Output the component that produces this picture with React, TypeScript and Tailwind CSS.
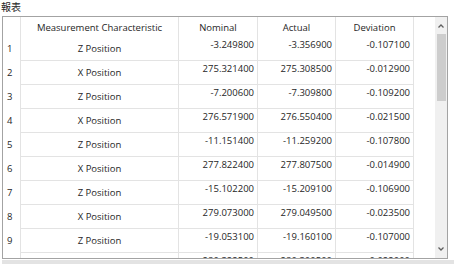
const rows = [
  ['1', 'Z Position', '-3.249800', '-3.356900', '-0.107100'],
  ['2', 'X Position', '275.321400', '275.308500', '-0.012900'],
  ['3', 'Z Position', '-7.200600', '-7.309800', '-0.109200'],
  ['4', 'X Position', '276.571900', '276.550400', '-0.021500'],
  ['5', 'Z Position', '-11.151400', '-11.259200', '-0.107800'],
  ['6', 'X Position', '277.822400', '277.807500', '-0.014900'],
  ['7', 'Z Position', '-15.102200', '-15.209100', '-0.106900'],
  ['8', 'X Position', '279.073000', '279.049500', '-0.023500'],
  ['9', 'Z Position', '-19.053100', '-19.160100', '-0.107000'],
  ['10', 'X Position', '280.322500', '280.300500', '-0.022000'],
];

export default function App() {
  return (
    <div className="w-[454px] h-[264px] bg-white flex flex-col overflow-hidden text-[#262626] font-['Open_Sans','Noto_Sans_CJK_TC',sans-serif] text-[9.5px]">
      {/* タイトル */}
      <div className="h-[16px] pl-[1px] pt-[1px] text-[10px] leading-[12px] font-['Noto_Sans_CJK_TC',sans-serif]">
        報表
      </div>

      {/* テーブル */}
      <div className="ml-[2px] w-[446px] h-[243px] border border-[#a3a3a3] flex">
        <div className="flex-1 overflow-hidden">
          {/* ヘッダー */}
          <div className="flex h-[20px]">
            <div className="w-[18px] border-r border-[#e3e3e3]" />
            <div className="w-[158px] border-r border-[#e3e3e3] text-center pt-[5px] leading-[12px]">
              Measurement Characteristic
            </div>
            <div className="w-[79px] border-r border-[#e3e3e3] text-center pt-[5px] leading-[12px]">
              Nominal
            </div>
            <div className="w-[78px] border-r border-[#e3e3e3] text-center pt-[5px] leading-[12px]">
              Actual
            </div>
            <div className="w-[78px] border-r border-[#e3e3e3] text-center pt-[5px] leading-[12px]">
              Deviation
            </div>
          </div>

          {rows.map((r) => (
            <div key={r[0]} className="flex h-[24px]">
              <div className="w-[18px] border-r border-[#e3e3e3] pl-[4px] flex items-center leading-[12px]">
                {r[0]}
              </div>
              <div className="w-[158px] border-r border-b border-[#e3e3e3] flex items-center justify-center leading-[12px]">
                {r[1]}
              </div>
              {r.slice(2).map((v, i) => (
                <div
                  key={i}
                  className={`${i === 0 ? 'w-[79px]' : 'w-[78px]'} border-r border-b border-[#e3e3e3] text-right pr-[3px] pt-[2px] leading-[12px]`}
                >
                  {v}
                </div>
              ))}
            </div>
          ))}
        </div>

        {/* スクロールバー */}
        <div className="w-[12px] bg-[#f0f0f0] flex flex-col items-center">
          <svg width="8" height="16" viewBox="0 0 8 16" className="mt-[1px]">
            <path d="M1.5 9.5 L4 7 L6.5 9.5" fill="none" stroke="#606060" strokeWidth="1.3" />
          </svg>
          <div className="w-[9px] h-[67px] bg-[#cdcdcd] mt-[0px]" />
          <div className="flex-1" />
          <svg width="8" height="16" viewBox="0 0 8 16" className="mb-[1px]">
            <path d="M1.5 6.5 L4 9 L6.5 6.5" fill="none" stroke="#606060" strokeWidth="1.3" />
          </svg>
        </div>
      </div>

      <div className="ml-[2px] mt-[1px] flex-1 bg-[#e3e3e3]" />
    </div>
  );
}
